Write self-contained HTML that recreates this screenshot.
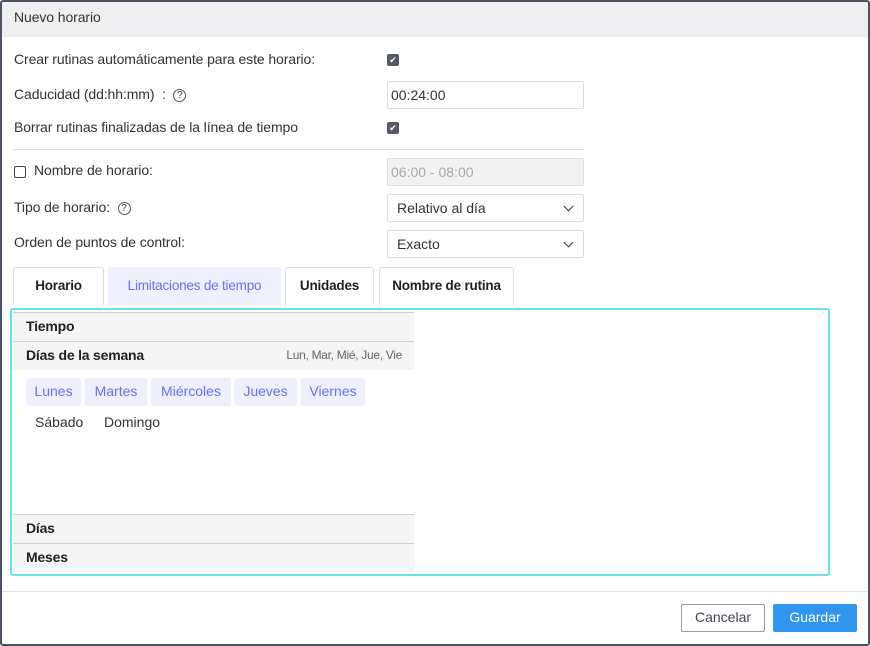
<!DOCTYPE html><html><head><style>
*{box-sizing:border-box;margin:0;padding:0}
body{width:870px;height:646px;background:#fff;font-family:"Liberation Sans",sans-serif;font-size:14px;color:#333;position:relative;overflow:hidden}
.a{position:absolute}
.frame{left:0;top:0;width:870px;height:646px;border:2px solid #4b5262;border-radius:3px}
.hdr{left:2px;top:2px;width:866px;height:35px;background:#efeff1}
.lbl{left:14px;line-height:18px;letter-spacing:-0.1px}
.cb{width:12px;height:12px;background:#555a66;border-radius:2px;color:#fff;font-size:9px;line-height:12px;text-align:center}
.inp{left:387px;width:197px;height:28px;border:1px solid #ddd;border-radius:2px;line-height:26px;padding-left:3px}
.sel{padding-left:9px}
.chev{position:absolute;right:11px;top:8px;width:7px;height:7px;border-right:1.5px solid #333;border-bottom:1.5px solid #333;transform:rotate(45deg)}
.q{display:inline-block;width:13px;height:13px;border:1px solid #555;border-radius:50%;font-size:10px;line-height:11px;text-align:center;vertical-align:1px}
.tab{top:267px;height:38px;border:1px solid #ddd;border-bottom:none;border-radius:3px 3px 0 0;text-align:center;line-height:35px;font-weight:bold;font-size:13.5px;color:#222;letter-spacing:-0.2px}
.row{left:13px;width:401px;background:#f5f5f5;border-top:1px solid #d0d0d0;font-weight:bold;color:#222;padding-left:13px;letter-spacing:-0.2px}
.chip{top:378px;height:28px;background:#eef0fd;color:#6a6ff0;border-radius:3px;line-height:26px;text-align:center}
.btn{top:604px;height:28px;border-radius:2px;line-height:25px;text-align:center}
</style></head><body>
<div class="a hdr"></div>
<div class="a lbl" style="top:8px">Nuevo horario</div>
<div class="a lbl" style="top:50px">Crear rutinas automáticamente para este horario:</div>
<div class="a cb" style="left:387px;top:54px">✔</div>
<div class="a lbl" style="top:85px">Caducidad (dd:hh:mm) &nbsp;: &nbsp;<span class="q">?</span></div>
<div class="a inp" style="top:81px">00:24:00</div>
<div class="a lbl" style="top:118px">Borrar rutinas finalizadas de la línea de tiempo</div>
<div class="a cb" style="left:387px;top:122px">✔</div>
<div class="a" style="left:14px;top:149px;width:570px;height:1px;background:#ddd"></div>
<div class="a" style="left:14px;top:166px;width:12px;height:12px;border:1px solid #444;border-radius:2px"></div>
<div class="a lbl" style="left:34px;top:161px">Nombre de horario:</div>
<div class="a inp" style="top:158px;background:#f2f2f2;color:#aaa">06:00 - 08:00</div>
<div class="a lbl" style="top:198px">Tipo de horario: &nbsp;<span class="q">?</span></div>
<div class="a inp sel" style="top:194px">Relativo al día<span class="chev"></span></div>
<div class="a lbl" style="top:233px">Orden de puntos de control:</div>
<div class="a inp sel" style="top:230px">Exacto<span class="chev"></span></div>
<div class="a tab" style="left:13px;width:91px">Horario</div>
<div class="a tab" style="left:108px;width:173px;border-color:#eef0fd;background:#eef0fd;color:#6a6ff0;font-weight:normal">Limitaciones de tiempo</div>
<div class="a tab" style="left:285px;width:89px">Unidades</div>
<div class="a tab" style="left:379px;width:135px">Nombre de rutina</div>
<div class="a" style="left:10px;top:308px;width:820px;height:268px;border:2px solid #6fdfee;border-radius:3px"></div>
<div class="a row" style="top:312px;height:30px;line-height:27px">Tiempo</div>
<div class="a row" style="top:341px;height:29px;line-height:27px">Días de la semana<span style="position:absolute;right:12px;font-weight:normal;font-size:12px;color:#666;letter-spacing:-0.3px">Lun, Mar, Mié, Jue, Vie</span></div>
<div class="a chip" style="left:26px;width:55px">Lunes</div>
<div class="a chip" style="left:85px;width:62px">Martes</div>
<div class="a chip" style="left:151px;width:80px">Miércoles</div>
<div class="a chip" style="left:234px;width:63px">Jueves</div>
<div class="a chip" style="left:301px;width:64px">Viernes</div>
<div class="a" style="left:35px;top:414px">Sábado</div>
<div class="a" style="left:104px;top:414px">Domingo</div>
<div class="a row" style="top:514px;height:30px;line-height:27px">Días</div>
<div class="a row" style="top:543px;height:29px;line-height:27px">Meses</div>
<div class="a" style="left:2px;top:591px;width:866px;height:1px;background:#e3e3e3"></div>
<div class="a btn" style="left:681px;width:84px;border:1px solid #999;color:#445">Cancelar</div>
<div class="a btn" style="left:773px;width:84px;background:#2f95ee;color:#fff;border:1px solid #2f95ee">Guardar</div>
<div class="a frame"></div>
</body></html>
